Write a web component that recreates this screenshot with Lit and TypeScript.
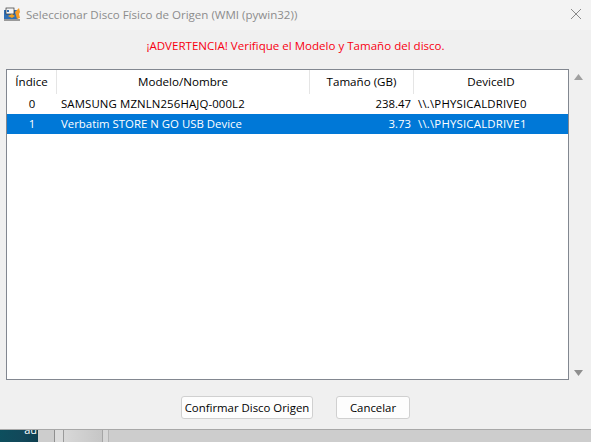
import { LitElement, html, css } from "lit";
import { customElement } from "lit/decorators.js";

const rows = [
  { i: "0", m: "SAMSUNG MZNLN256HAJQ-000L2", s: "238.47", d: "\\\\.\\PHYSICALDRIVE0", sel: false, caps: true },
  { i: "1", m: "Verbatim STORE N GO USB Device", s: "3.73", d: "\\\\.\\PHYSICALDRIVE1", sel: true, caps: false },
];

@customElement("app-root")
export class AppRoot extends LitElement {
  static styles = css`
    :host { display: block; width: 591px; height: 442px; overflow: hidden; background: #cfcfcf;
      font-family: "Open Sans", "Noto Sans", sans-serif; font-size: 11.4px; color: #000; }
    .win { height: 430px; background: #f0f0f0; display: flex; flex-direction: column; border-bottom: 1px solid #a8a8a8; box-sizing: border-box; }
    .title { height: 30px; flex: none; background: #f3f3f3; display: flex; align-items: center; padding: 0 9px 2px 4px; box-sizing: border-box; gap: 4px; color: #8c8c8c; font-size: 11.55px; }
    .title span { flex: 1; }
    .title svg { flex: none; }
    .warn { height: 39px; flex: none; display: flex; align-items: center; justify-content: center; color: #f80010; font-size: 11.55px; padding-bottom: 9px; box-sizing: border-box; }
    .mid { height: 311px; flex: none; display: flex; padding-left: 6px; }
    .list { width: 563px; box-sizing: border-box; border: 1px solid #828790; background: #fff; display: flex; flex-direction: column; }
    .row { display: grid; grid-template-columns: 50px 253px 104px 1fr; align-items: center; }
    .head { height: 24px; font-size: 11.6px; }
    .head div { height: 100%; display: flex; align-items: center; justify-content: center; border-right: 1px solid #e5e5e5; box-sizing: border-box; padding-bottom: 1px; }
    .head div:last-child { border-right: none; }
    .item { height: 20px; white-space: nowrap; padding-bottom: 1px; box-sizing: border-box; }
    .item.sel { background: #0078d7; color: #fff; }
    .c { text-align: center; }
    .l { padding-left: 4px; }
    .caps { letter-spacing: 0.12px; }
    .dev { letter-spacing: 0.2px; }
    .r { text-align: right; padding-right: 3px; }
    .scroll { width: 21px; display: flex; flex-direction: column; justify-content: space-between; align-items: center; padding: 5px 3px 0 0; box-sizing: border-box; }
    .scroll svg { display: block; }
    .down { margin-bottom: 4px; }
    .buttons { flex: 1; display: flex; justify-content: center; align-items: flex-start; gap: 23px; padding-top: 16px; }
    button { font: inherit; color: #000; height: 23px; background: #fdfdfd; border: 1px solid #d0d0d0; border-radius: 3px; padding: 0 0 1px; box-sizing: border-box; }
    .ok { width: 132px; }
    .no { width: 74px; }
    .under { height: 12px; display: flex; background: #cfcfcf; }
    .teal { width: 38px; background: linear-gradient(100deg, #0d4f5e, #12485a 60%, #0c3d4e); color: #fff; font-size: 11px; line-height: 12px; text-align: right; padding-right: 1px; box-sizing: border-box; overflow: hidden; }
    .teal span { display: block; margin-top: -6px; }
    .gap { width: 16px; background: #cdcdcd; }
    .strip { width: 8px; border-left: 1px solid #8f8f8f; background: #dcdcdc; }
    .pane { width: 38px; border-left: 1px solid #9a9a9a; background: linear-gradient(90deg, #d8d8d8, #c6c6c6); }
    .pane2 { width: 5px; border-left: 1px solid #a5a5a5; background: #d6d6d6; }
    .rest { flex: 1; border-left: 1px solid #b5b5b5; background: #cdcdcd; }
  `;

  render() {
    return html`
      <div class="win">
        <div class="title">
          <svg width="18" height="18" viewBox="0 0 18 18">
            <rect x="0" y="5" width="14" height="10" fill="#2f6fb5"/>
            <rect x="2" y="3" width="8" height="6" fill="#f4f4f4" stroke="#333" stroke-width=".7"/>
            <rect x="0" y="14" width="16" height="2" fill="#9a9a9a"/>
            <path d="M4 11l4-2 3 2-3 2z" fill="#f0a020"/>
            <path d="M11 7l4-4 1 4-1 2 1 4-3 1z" fill="#f59a23"/>
            <rect x="3" y="5" width="2" height="2" fill="#2f6fb5"/>
          </svg>
          <span>Seleccionar Disco Físico de Origen (WMI (pywin32))</span>
          <svg width="12" height="12" viewBox="0 0 12 12"><path d="M1 1l10 10M11 1L1 11" stroke="#8a8a8a" stroke-width="1" fill="none"/></svg>
        </div>
        <div class="warn">¡ADVERTENCIA! Verifique el Modelo y Tamaño del disco.</div>
        <div class="mid">
          <div class="list">
            <div class="row head"><div>Índice</div><div>Modelo/Nombre</div><div>Tamaño (GB)</div><div>DeviceID</div></div>
            ${rows.map(r => html`
              <div class="row item ${r.sel ? "sel" : ""}">
                <div class="c">${r.i}</div><div class="l ${r.caps ? "caps" : ""}">${r.m}</div><div class="r">${r.s}</div><div class="l dev">${r.d}</div>
              </div>`)}
          </div>
          <div class="scroll">
            <svg width="9" height="6" viewBox="0 0 9 6"><path d="M4.5 0L9 6H0z" fill="#a0a0a0"/></svg>
            <svg class="down" width="9" height="6" viewBox="0 0 9 6"><path d="M0 0h9L4.500 6z" fill="#8f8f8f"/></svg>
          </div>
        </div>
        <div class="buttons">
          <button class="ok">Confirmar Disco Origen</button>
          <button class="no">Cancelar</button>
        </div>
      </div>
      <div class="under">
        <div class="teal"><span>au</span></div>
        <div class="gap"></div>
        <div class="strip"></div>
        <div class="pane"></div>
        <div class="pane2"></div>
        <div class="rest"></div>
      </div>
    `;
  }
}
